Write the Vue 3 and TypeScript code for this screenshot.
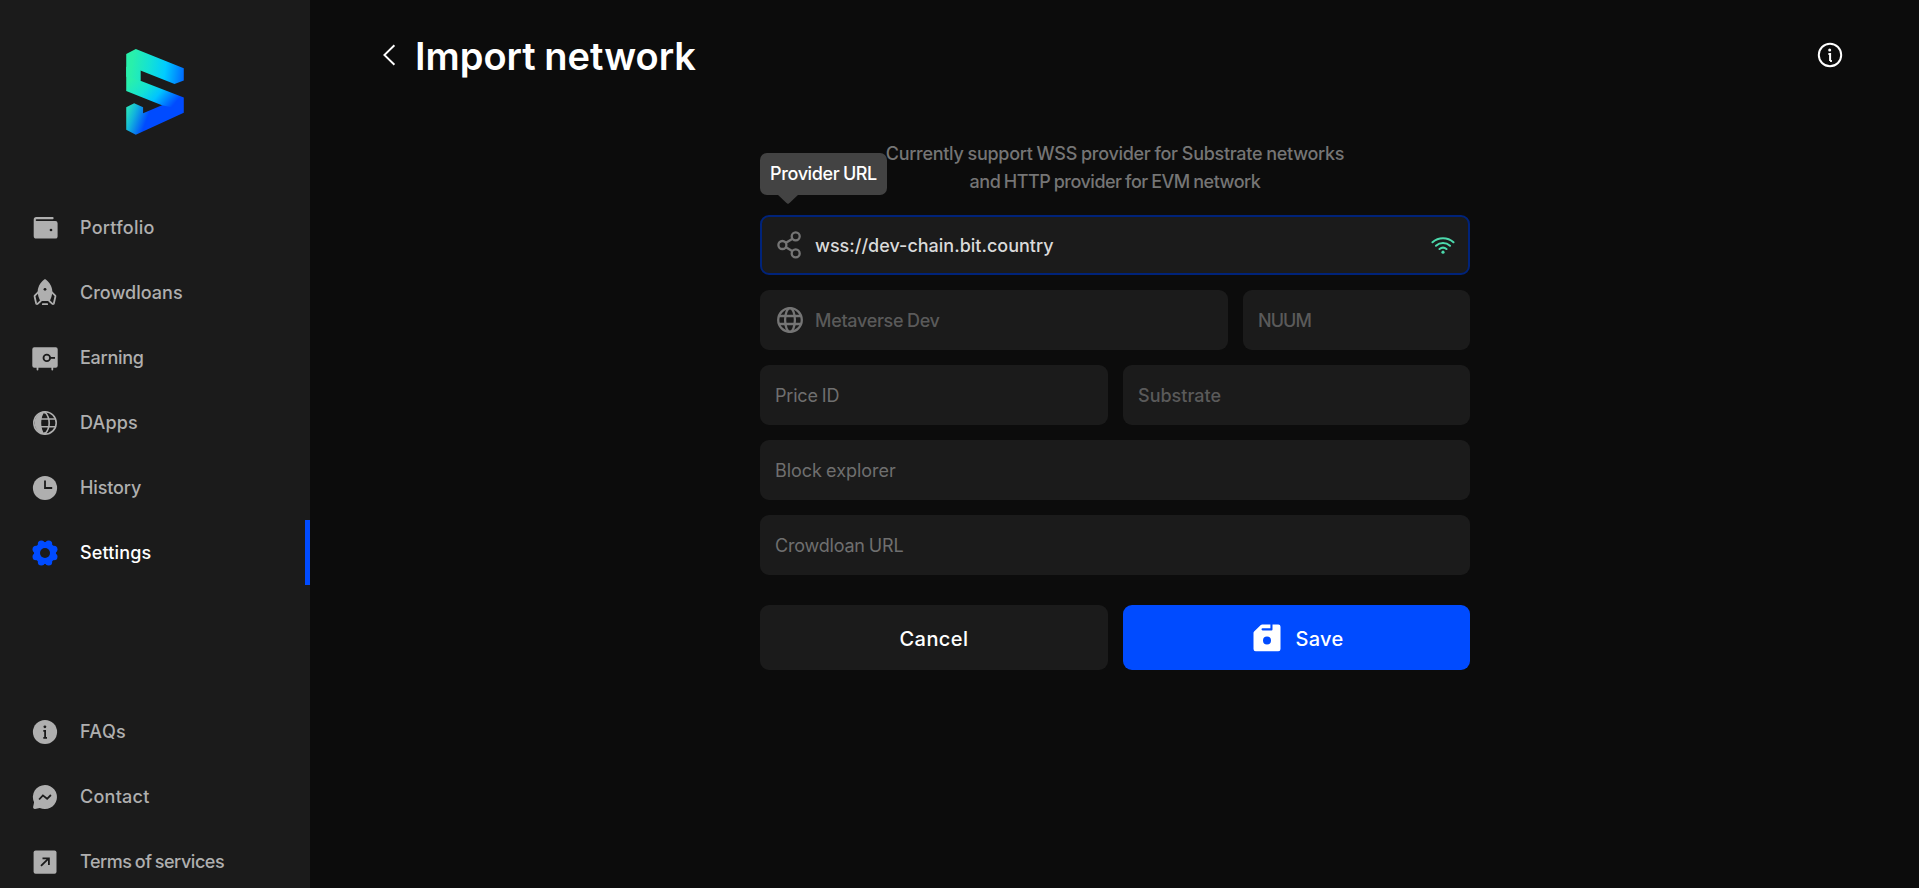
<script setup lang="ts">
import { ref } from 'vue'

interface MenuItem {
  id: string
  label: string
  tracking: number
}

const mainMenu: MenuItem[] = [
  { id: 'portfolio', label: 'Portfolio', tracking: 0.25 },
  { id: 'crowdloans', label: 'Crowdloans', tracking: 0.02 },
  { id: 'earning', label: 'Earning', tracking: -0.28 },
  { id: 'dapps', label: 'DApps', tracking: 0.16 },
  { id: 'history', label: 'History', tracking: -0.12 },
  { id: 'settings', label: 'Settings', tracking: 0.15 },
]

const bottomMenu: MenuItem[] = [
  { id: 'faqs', label: 'FAQs', tracking: 0.4 },
  { id: 'contact', label: 'Contact', tracking: 0.25 },
  { id: 'terms', label: 'Terms of services', tracking: -0.44 },
]

const menus = [
  { name: 'main', items: mainMenu },
  { name: 'support', items: bottomMenu },
]

const active = ref('settings')
const providerUrl = ref('wss://dev-chain.bit.country')
const priceId = ref('')
const blockExplorer = ref('')
const crowdloanUrl = ref('')

// Tooth centres of the settings gear, eight of them around (15, 15)
const gearTeeth = Array.from({ length: 8 }, (_, i) => {
  const a = ((22.5 + i * 45) * Math.PI) / 180
  return { x: 15 + 9.7 * Math.cos(a), y: 15 + 9.7 * Math.sin(a) }
})
</script>

<template>
  <div class="layout">
    <aside class="sidebar">
      <svg class="logo" viewBox="78 56 174 260">
        <defs>
          <linearGradient id="armFill" gradientUnits="userSpaceOnUse" x1="92" y1="120" x2="255" y2="142">
            <stop offset="0" stop-color="#29f0ab" />
            <stop offset="0.32" stop-color="#14e2d4" />
            <stop offset="0.62" stop-color="#00ccff" />
            <stop offset="0.8" stop-color="#009cff" />
            <stop offset="1" stop-color="#0064ff" />
          </linearGradient>
          <linearGradient id="midFill" gradientUnits="userSpaceOnUse" x1="100" y1="140" x2="212" y2="236">
            <stop offset="0" stop-color="#29f0ab" />
            <stop offset="0.35" stop-color="#14e2d4" />
            <stop offset="0.62" stop-color="#00c4ff" />
            <stop offset="1" stop-color="#004bff" />
          </linearGradient>
          <linearGradient id="baseFill" gradientUnits="userSpaceOnUse" x1="80" y1="248" x2="140" y2="270">
            <stop offset="0" stop-color="#25dcc0" />
            <stop offset="0.35" stop-color="#12b4dc" />
            <stop offset="1" stop-color="#004bff" />
          </linearGradient>
        </defs>
        <path fill="url(#midFill)" d="M78 110L121 121V152L252 203V249L200 255L186 226L78 183Z" />
        <path fill="url(#armFill)" d="M78 71L107 56L252 114V151L224 162L121 121V152L78 140Z" />
        <path fill="url(#baseFill)" d="M129 250L186 226L215 232L252 249L107 315L78 300V232L102 220L129 232Z" />
      </svg>

      <nav v-for="menu in menus" :key="menu.name" :class="['menu', menu.name]">
        <a
          v-for="item in menu.items"
          :key="item.id"
          :class="['item', { active: item.id === active }]"
          @click="active = item.id"
        >
          <svg class="item-icon" viewBox="0 0 30 30">
            <template v-if="item.id === 'portfolio'">
              <path class="solid" d="M6.3 4.1H22.7a1 1 0 0 1 .9 1.1 1 1 0 0 1-.9 1H6.6a.9.9 0 0 0 0 1.8H25.4a2.2 2.2 0 0 1 2.2 2.2V23.4a2.2 2.2 0 0 1-2.2 2.2H6.3a2.6 2.6 0 0 1-2.6-2.6V6.7A2.6 2.6 0 0 1 6.3 4.1Z" />
              <circle class="cut" cx="21" cy="17" r="1.35" />
            </template>
            <template v-else-if="item.id === 'crowdloans'">
              <path class="solid" d="M15 1C17.6 2.5 22.3 7.5 22.3 13.5C22.3 17.5 21 20.5 19.6 23H10.4C9 20.5 7.7 17.5 7.7 13.5C7.7 7.5 12.4 2.5 15 1Z" />
              <path class="line" d="M8.3 14.2L4.8 17.6a1 1 0 0 0-.2.9l1.5 6.8c.2.8 1 .9 1.5.5L10.7 23M21.7 14.2l3.5 3.4a1 1 0 0 1 .2.9l-1.5 6.8c-.2.8-1 .9-1.5.5L19.3 23M12.8 26.2h4.4" />
              <circle class="cut" cx="15" cy="11.3" r="1.4" />
            </template>
            <template v-else-if="item.id === 'earning'">
              <path class="solid" d="M4.3 4.3H25.7a2 2 0 0 1 2 2V22.7a2 2 0 0 1-2 2H23.2V26.6a.9.9 0 0 1-1.8 0V24.7H8.4V26.6a.9.9 0 0 1-1.8 0V24.7H4.3a2 2 0 0 1-2-2V6.3a2 2 0 0 1 2-2Z" />
              <circle class="cut-line" cx="16.8" cy="14.9" r="3.3" />
              <path class="cut-line" d="M20.2 14.9H25" />
            </template>
            <template v-else-if="item.id === 'dapps'">
              <circle class="line thin" cx="15" cy="14.9" r="11.2" />
              <path class="solid" d="M15 3A12 12 0 0 0 15 26.8C12.4 23.6 11.2 19 11.2 14.9S12.4 6.2 15 3Z" />
              <path class="line thin" d="M15 4C17.7 7 19.2 10.8 19.2 14.9S17.7 22.8 15 25.8M10.5 11h15M10.5 18.8h15" />
              <path class="solid" d="M14.2 3h1.6v2.6h-2.4zM14.2 26.8h1.6v-2.6h-2.4z" />
            </template>
            <template v-else-if="item.id === 'history'">
              <circle class="solid" cx="15" cy="15" r="12.1" />
              <path class="cut-line" d="M15 7.4V15H22.2" />
            </template>
            <template v-else-if="item.id === 'settings'">
              <circle class="solid" cx="15" cy="15" r="11" />
              <circle v-for="(t, i) in gearTeeth" :key="i" class="solid" :cx="t.x" :cy="t.y" r="3.5" />
              <circle class="cut" cx="15" cy="15" r="5" />
            </template>
            <template v-else-if="item.id === 'faqs'">
              <circle class="solid" cx="15" cy="15" r="12.1" />
              <circle class="cut" cx="14.9" cy="9.8" r="1.4" />
              <path class="cut-line" d="M13.3 13.8H15.1V20.9M13.3 20.9H17" />
            </template>
            <template v-else-if="item.id === 'contact'">
              <path class="solid" d="M15 2.9A12.1 12.1 0 1 1 9.8 26L5 26.9A1.6 1.6 0 0 1 3.1 25.1L4.1 20.3A12.1 12.1 0 0 1 15 2.9Z" />
              <path class="cut-line" d="M9.1 17.5L12.9 13.4L17.1 16.8L20.9 13" />
            </template>
            <template v-else>
              <rect class="solid" x="3.6" y="3.4" width="22.9" height="23.3" rx="2" />
              <path class="cut-line" d="M11 18.8L18.7 11.4M12.5 11.3H18.9V18" />
            </template>
          </svg>
          <span :style="{ letterSpacing: item.tracking + 'px' }">{{ item.label }}</span>
        </a>
      </nav>
    </aside>

    <main class="content">
      <header class="header">
        <svg class="back" viewBox="0 0 30 30">
          <path d="M19.4 5.2L9.4 15L19.4 24.8" />
        </svg>
        <h1 class="title">Import network</h1>
        <svg class="info" viewBox="0 0 30 30">
          <circle class="ring" cx="15" cy="15" r="11.2" />
          <circle class="dot" cx="14.7" cy="9.9" r="1.5" />
          <path class="stem" d="M13.4 13.9H15.1V20.9M15.1 20.9H16.9" />
        </svg>
      </header>

      <form class="form" @submit.prevent>
        <p class="desc">
          <span class="desc-first">Currently support WSS provider for Substrate networks</span><br />
          <span class="desc-second">and HTTP provider for EVM network</span>
        </p>

        <div class="field focused">
          <div class="tooltip">Provider URL</div>
          <svg class="field-icon" viewBox="0 0 30 30">
            <path d="M10.6 13L17.5 8.7M10.6 17L17.5 21.3" />
            <circle cx="7.4" cy="15" r="4" />
            <circle cx="20.7" cy="6.3" r="4" />
            <circle cx="20.7" cy="23.4" r="4" />
          </svg>
          <input v-model="providerUrl" class="input url" spellcheck="false" />
          <svg class="wifi" viewBox="0 0 24 24">
            <path d="M1.5 9.2A15.8 15.8 0 0 1 22.5 9.2M5 12.7A10.6 10.6 0 0 1 19 12.7M8.5 16A5.6 5.6 0 0 1 15.5 16" />
            <circle cx="12" cy="19.2" r="1.6" />
          </svg>
        </div>

        <div class="row name-row">
          <div class="field">
            <svg class="field-icon" viewBox="0 0 30 30">
              <circle cx="15" cy="15" r="11.8" />
              <ellipse cx="15" cy="15" rx="4.9" ry="11.8" />
              <path d="M4 11H26M4 19H26" />
            </svg>
            <input class="input name" value="Metaverse Dev" disabled />
          </div>
          <div class="field"><input class="input symbol" value="NUUM" disabled /></div>
        </div>

        <div class="row half-row">
          <div class="field"><input v-model="priceId" class="input price" placeholder="Price ID" /></div>
          <div class="field"><input class="input" value="Substrate" disabled /></div>
        </div>

        <div class="field"><input v-model="blockExplorer" class="input explorer" placeholder="Block explorer" /></div>
        <div class="field"><input v-model="crowdloanUrl" class="input crowdloan" placeholder="Crowdloan URL" /></div>

        <div class="row half-row actions">
          <button type="button" class="button cancel">Cancel</button>
          <button type="submit" class="button save">
            <svg class="save-icon" viewBox="0 0 30 30">
              <path class="solid" fill-rule="evenodd" d="M10.3 1.5H18.4V5.2H10.6a1.1 1.1 0 0 0 0 2.2H19.5a1 1 0 0 0 1-1V1.5H26.3a2.2 2.2 0 0 1 2.2 2.2V26.1a2.2 2.2 0 0 1-2.2 2.2H3.7a2.2 2.2 0 0 1-2.2-2.2V9.8a2 2 0 0 1 .6-1.4L8.8 2.1a2 2 0 0 1 1.5-.6ZM15 13.4a4 4 0 1 0 0 8 4 4 0 0 0 0-8Z" />
            </svg>
            <span>Save</span>
          </button>
        </div>
      </form>
    </main>
  </div>
</template>

<style>
body {
  background: #0c0c0c;
  overflow: hidden;
}
</style>

<style scoped>
.layout {
  display: flex;
  height: 888px;
  overflow: hidden;
  background: #0c0c0c;
  color: #fff;
  font: 500 18px/28px Inter, "Noto Sans", sans-serif;
}
.sidebar {
  flex: 0 0 310px;
  box-sizing: border-box;
  padding-top: 49px;
  background: #1b1b1b;
}
.logo {
  display: block;
  width: 58px;
  height: 86px;
  margin: 0 auto 60px 126px;
}
.menu.support {
  margin-top: 114px;
}
.item {
  display: flex;
  align-items: center;
  gap: 20px;
  height: 65px;
  box-sizing: border-box;
  padding-left: 30px;
  border-right: 5px solid transparent;
  color: #afafaf;
  white-space: nowrap;
  word-spacing: -1.2px;
  cursor: pointer;
}
.item.active {
  color: #fff;
  border-right-color: #004bff;
}
.item-icon {
  width: 30px;
  height: 30px;
  color: #afafaf;
}
.item.active .item-icon {
  color: #004bff;
}
.item-icon .solid {
  fill: currentColor;
}
.item-icon .line {
  fill: none;
  stroke: currentColor;
  stroke-width: 1.8;
  stroke-linecap: round;
}
.item-icon .line.thin {
  stroke-width: 1.6;
}
.item-icon .cut {
  fill: #1b1b1b;
}
.item-icon .cut-line {
  fill: none;
  stroke: #1b1b1b;
  stroke-width: 1.8;
}
.content {
  flex: 1;
  display: flex;
  flex-direction: column;
}
.header {
  display: flex;
  align-items: center;
  height: 110px;
  padding: 0 74px 0 65px;
}
.back {
  width: 30px;
  height: 30px;
  fill: none;
  stroke: #fff;
  stroke-width: 1.9;
}
.title {
  flex: 1;
  margin: 2px 0 0 10px;
  font-size: 38px;
  font-weight: 600;
  line-height: 50px;
  word-spacing: -1px;
}
.info {
  width: 30px;
  height: 30px;
}
.info .ring,
.info .stem {
  fill: none;
  stroke: #fff;
  stroke-width: 2;
}
.info .dot {
  fill: #fff;
}
.form {
  display: flex;
  flex-direction: column;
  gap: 15px;
  width: 710px;
  margin: 30px 0 0 450px;
}
.desc {
  margin: 0 0 4px;
  color: #757575;
  text-align: center;
  white-space: nowrap;
}
.desc-first {
  letter-spacing: -0.29px;
  word-spacing: -0.5px;
}
.desc-second {
  letter-spacing: -0.5px;
  word-spacing: -0.8px;
}
.row {
  display: grid;
  gap: 15px;
}
.name-row {
  grid-template-columns: 468px 1fr;
}
.half-row {
  grid-template-columns: 348px 1fr;
}
.field {
  position: relative;
  display: flex;
  align-items: center;
  gap: 10px;
  min-width: 0;
  height: 60px;
  box-sizing: border-box;
  padding: 0 15px;
  border-radius: 9px;
  background: #1b1b1b;
}
.focused {
  border: 2px solid #00237a;
  padding: 0 13px;
}
.field-icon {
  flex: none;
  width: 30px;
  height: 30px;
  fill: none;
  stroke: #757575;
  stroke-width: 2.3;
}
.input {
  flex: 1;
  min-width: 0;
  padding: 2px 0 0;
  border: 0;
  outline: 0;
  background: transparent;
  color: #5a5a5a;
  font: inherit;
}
.input::placeholder {
  color: #6f6f6f;
  opacity: 1;
}
.url {
  color: #dadada;
}
.name {
  letter-spacing: -0.3px;
  word-spacing: -0.8px;
}
.symbol {
  letter-spacing: -0.92px;
}
.price,
.explorer,
.crowdloan {
  font-weight: 400;
  word-spacing: -0.8px;
}
.price {
  letter-spacing: -0.18px;
}
.explorer {
  letter-spacing: -0.04px;
}
.crowdloan {
  letter-spacing: -0.2px;
}
.wifi {
  flex: none;
  width: 24px;
  height: 24px;
  margin-right: 0.5px;
  fill: none;
  stroke: #4cd9ac;
  stroke-width: 2.1;
  stroke-linecap: round;
}
.wifi circle {
  fill: #4cd9ac;
  stroke: none;
}
.tooltip {
  position: absolute;
  left: -2px;
  bottom: 78px;
  width: 127px;
  height: 42px;
  box-sizing: border-box;
  border-radius: 7px;
  background: #434343;
  line-height: 42px;
  text-align: center;
  white-space: nowrap;
  letter-spacing: -0.38px;
  word-spacing: -0.8px;
}
.tooltip::after {
  content: "";
  position: absolute;
  left: 17px;
  top: 41px;
  width: 22px;
  height: 10px;
  background: #434343;
  clip-path: polygon(0 0, 100% 0, 58% 88%, 50% 100%, 42% 88%);
}
.actions {
  margin-top: 15px;
}
.button {
  display: flex;
  align-items: center;
  justify-content: center;
  gap: 13px;
  height: 65px;
  padding: 2px 0 0;
  border: 0;
  border-radius: 9px;
  color: #fff;
  font: 500 20px/30px Inter, "Noto Sans", sans-serif;
}
.cancel {
  background: #1b1b1b;
  letter-spacing: 0.43px;
}
.save {
  padding-left: 3px;
  background: #004bff;
  letter-spacing: 0.31px;
}
.save-icon {
  width: 30px;
  height: 30px;
  margin-top: -2px;
}
.save-icon .solid {
  fill: #fff;
}
</style>
